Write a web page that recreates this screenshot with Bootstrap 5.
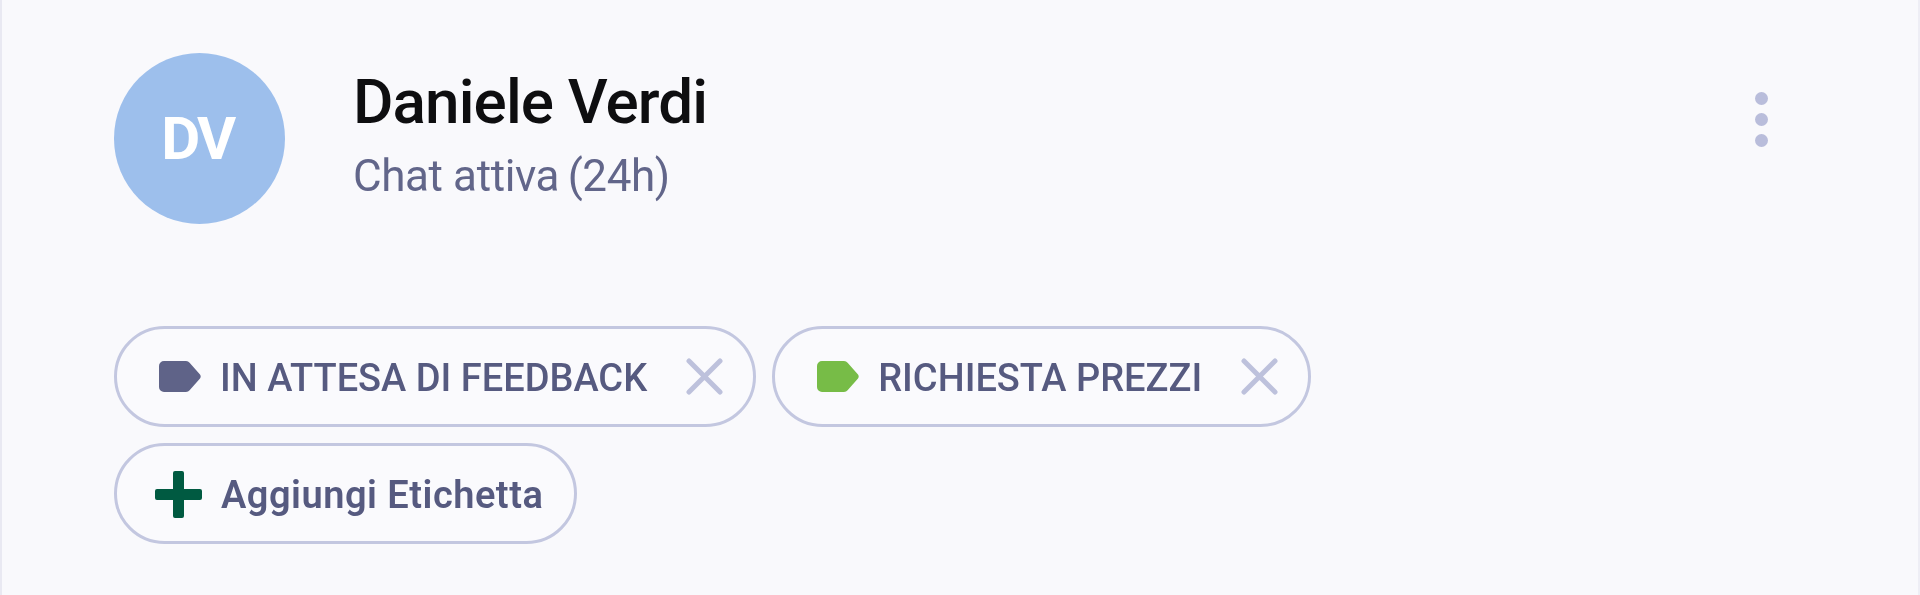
<!DOCTYPE html>
<html lang="it">
<head>
<meta charset="utf-8">
<title>Daniele Verdi</title>
<link href="https://cdn.jsdelivr.net/npm/bootstrap@5.3.0/dist/css/bootstrap.min.css" rel="stylesheet">
<style>
html,body{height:100%;background:#f9f9fc;}
body{font-family:Roboto,"Liberation Sans",sans-serif;overflow:hidden;}
.chat-panel{height:595px;padding:53px 0 0 112px;border-left:2px solid #e9e9f2;border-right:2px solid #eeeef5;filter:blur(.6px);}
.chat-head{padding-right:150px;}
.avatar-disc{width:171px;height:171px;background:#9dbfec;color:#fff;font-size:60px;font-weight:700;letter-spacing:-2.5px;padding-right:4px;margin-right:68px;}
.who-name{font-size:62px;font-weight:500;line-height:70px;color:#0e0e10;letter-spacing:-.9px;margin-top:14px;}
.who-state{font-size:44px;line-height:50px;color:#62668a;letter-spacing:-.4px;margin-top:14px;}
.kebab{gap:8px;margin-top:39px;}
.kebab i{display:block;width:13px;height:13px;border-radius:50%;background:#b9bddb;}
.tag-area{margin-top:102px;gap:16px 16px;max-width:1500px;}
.tag-pill{height:101px;border:3px solid #c3c7e0;padding:0 30px 0 42px;color:#565a80;font-size:38px;font-weight:500;letter-spacing:0;gap:19px;background:#fafafd;}
.tag-pill span{padding-top:4px;}
.tag-add{padding:0 31px 0 38px;font-weight:600;letter-spacing:.5px;gap:19px;}
.tag-flag{width:42px;height:31px;flex:none;}
.tag-x{width:37px;height:37px;flex:none;margin-left:20px;}
.tag-plus{width:47px;height:47px;flex:none;margin-top:2px;}
</style>
</head>
<body>
<div class="chat-panel">
  <div class="chat-head d-flex align-items-start">
    <div class="avatar-disc rounded-circle d-flex align-items-center justify-content-center flex-shrink-0">DV</div>
    <div class="flex-grow-1">
      <div class="who-name">Daniele Verdi</div>
      <div class="who-state">Chat attiva&#8201;(24h)</div>
    </div>
    <div class="kebab d-flex flex-column"><i></i><i></i><i></i></div>
  </div>
  <div class="tag-area d-flex flex-wrap">
    <div class="tag-pill rounded-pill d-inline-flex align-items-center">
      <svg class="tag-flag" viewBox="0 0 42 31"><path d="M5 0H27a4.500 4.500 0 0 1 3.600 1.800L41 13.500a3.500 3.500 0 0 1 0 4L30.600 29.200A4.500 4.500 0 0 1 27 31H5a5 5 0 0 1-5-5V5a5 5 0 0 1 5-5z" fill="#5f6388"/></svg>
      <span>IN ATTESA DI FEEDBACK</span>
      <svg class="tag-x" viewBox="0 0 37 37"><path d="M3 3L34 34M34 3L3 34" stroke="#bdc1dc" stroke-width="5" stroke-linecap="round"/></svg>
    </div>
    <div class="tag-pill rounded-pill d-inline-flex align-items-center">
      <svg class="tag-flag" viewBox="0 0 42 31"><path d="M5 0H27a4.500 4.500 0 0 1 3.600 1.800L41 13.500a3.500 3.500 0 0 1 0 4L30.600 29.200A4.500 4.500 0 0 1 27 31H5a5 5 0 0 1-5-5V5a5 5 0 0 1 5-5z" fill="#77bc47"/></svg>
      <span>RICHIESTA PREZZI</span>
      <svg class="tag-x" viewBox="0 0 37 37"><path d="M3 3L34 34M34 3L3 34" stroke="#bdc1dc" stroke-width="5" stroke-linecap="round"/></svg>
    </div>
    <div class="tag-pill tag-add rounded-pill d-inline-flex align-items-center">
      <svg class="tag-plus" viewBox="0 0 47 47"><path d="M20 0h7a2 2 0 0 1 2 2V18H45a2 2 0 0 1 2 2v7a2 2 0 0 1-2 2H29V45a2 2 0 0 1-2 2h-7a2 2 0 0 1-2-2V29H2a2 2 0 0 1-2-2v-7a2 2 0 0 1 2-2H18V2a2 2 0 0 1 2-2z" fill="#005a41"/></svg>
      <span>Aggiungi Etichetta</span>
    </div>
  </div>
</div>
<script src="https://cdn.jsdelivr.net/npm/bootstrap@5.3.0/dist/js/bootstrap.bundle.min.js"></script>
</body>
</html>
